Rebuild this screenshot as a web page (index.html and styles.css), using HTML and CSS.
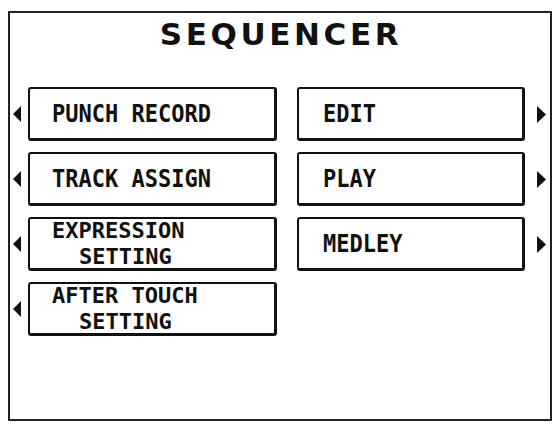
FILE: index.html
```html
<!DOCTYPE html>
<html>
<head>
<meta charset="utf-8">
<link rel="stylesheet" href="styles.css">
</head>
<body>
<div class="frame">
  <h1 class="title">SEQUENCER</h1>
  <div class="menu">
    <div class="col">
      <div class="row">
        <span class="arrow-cell left"><svg width="8" height="16" viewBox="0 0 8 16"><polygon points="8,0 8,16 0,8" fill="#111"/></svg></span>
        <div class="btn btn-left"><span class="label single">PUNCH RECORD</span></div>
      </div>
      <div class="row">
        <span class="arrow-cell left"><svg width="8" height="16" viewBox="0 0 8 16"><polygon points="8,0 8,16 0,8" fill="#111"/></svg></span>
        <div class="btn btn-left"><span class="label single">TRACK ASSIGN</span></div>
      </div>
      <div class="row">
        <span class="arrow-cell left"><svg width="8" height="16" viewBox="0 0 8 16"><polygon points="8,0 8,16 0,8" fill="#111"/></svg></span>
        <div class="btn btn-left"><span class="label">EXPRESSION<br><span class="indent">SETTING</span></span></div>
      </div>
      <div class="row">
        <span class="arrow-cell left"><svg width="8" height="16" viewBox="0 0 8 16"><polygon points="8,0 8,16 0,8" fill="#111"/></svg></span>
        <div class="btn btn-left"><span class="label">AFTER TOUCH<br><span class="indent">SETTING</span></span></div>
      </div>
    </div>
    <div class="col">
      <div class="row">
        <div class="btn btn-right"><span class="label single">EDIT</span></div>
        <span class="arrow-cell right"><svg width="9" height="17" viewBox="0 0 9 17"><polygon points="0,0 9,8.5 0,17" fill="#111"/></svg></span>
      </div>
      <div class="row">
        <div class="btn btn-right"><span class="label single">PLAY</span></div>
        <span class="arrow-cell right"><svg width="9" height="17" viewBox="0 0 9 17"><polygon points="0,0 9,8.5 0,17" fill="#111"/></svg></span>
      </div>
      <div class="row">
        <div class="btn btn-right"><span class="label single">MEDLEY</span></div>
        <span class="arrow-cell right"><svg width="9" height="17" viewBox="0 0 9 17"><polygon points="0,0 9,8.5 0,17" fill="#111"/></svg></span>
      </div>
    </div>
  </div>
</div>
</body>
</html>
```

FILE: styles.css
```css
html, body {
  margin: 0;
  padding: 0;
  background: #fff;
}

body {
  padding: 11px 5px 3px 8px;
  color: #111;
}

.frame {
  box-sizing: border-box;
  width: 544px;
  height: 410px;
  border: 2px solid #222;
  padding-top: 6px;
}

.title {
  margin: 0;
  text-align: center;
  font-family: "DejaVu Sans", sans-serif;
  font-weight: bold;
  font-size: 31px;
  line-height: 31px;
  letter-spacing: 3.6px;
  padding-left: 2px;
  color: #111;
}

.menu {
  display: flex;
  gap: 20px;
  margin-top: 37px;
}

.col {
  display: flex;
  flex-direction: column;
  gap: 11px;
}

.row {
  display: flex;
  align-items: center;
  height: 54px;
}

.arrow-cell {
  display: flex;
  align-items: center;
}

.arrow-cell.left {
  width: 18px;
  padding-left: 3px;
  box-sizing: border-box;
}

.arrow-cell.right {
  padding-left: 12px;
}

.btn {
  box-sizing: border-box;
  height: 54px;
  display: flex;
  align-items: center;
  border-style: solid;
  border-color: #111;
  border-width: 2px 3px 3px 2px;
  border-radius: 3px;
  font-family: "DejaVu Sans Mono", monospace;
  font-weight: bold;
  font-size: 22px;
  line-height: 25.6px;
  white-space: nowrap;
}

.label {
  display: block;
}

.label.single {
  transform: scaleY(1.1);
}

.btn-left {
  width: 249px;
  padding-left: 22px;
}

.btn-right {
  width: 228px;
  padding-left: 24px;
}

.indent {
  padding-left: 27px;
}
```
